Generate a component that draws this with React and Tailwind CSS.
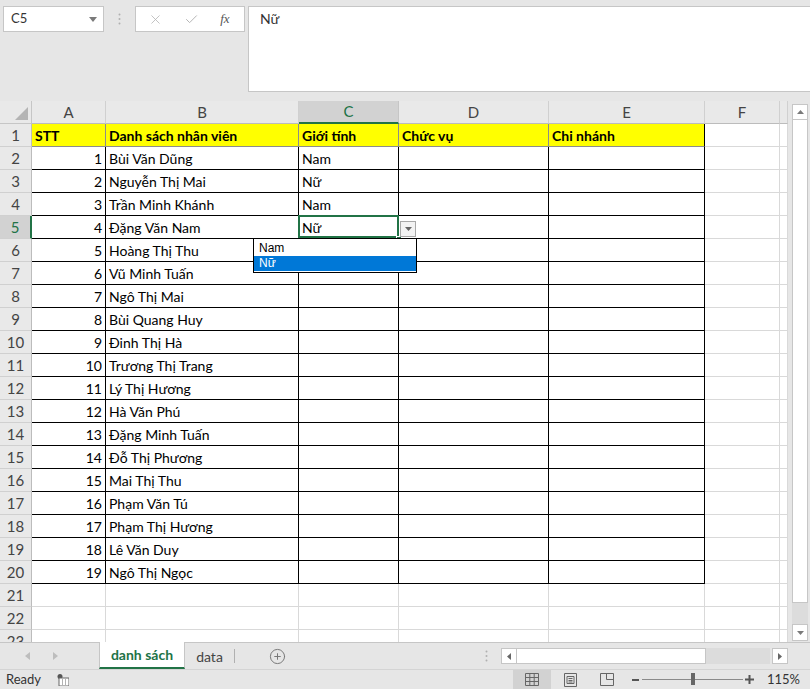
import { X, Check, CirclePlus } from "lucide-react";

const cols = [
  { key: "A", w: 74 },
  { key: "B", w: 193 },
  { key: "C", w: 100 },
  { key: "D", w: 150 },
  { key: "E", w: 156 },
  { key: "F", w: 75 },
  { key: "G", w: 8 },
];

const names = [
  ["Bùi Văn Dũng", "Nam"],
  ["Nguyễn Thị Mai", "Nữ"],
  ["Trần Minh Khánh", "Nam"],
  ["Đặng Văn Nam", "Nữ"],
  ["Hoàng Thị Thu", ""],
  ["Vũ Minh Tuấn", ""],
  ["Ngô Thị Mai", ""],
  ["Bùi Quang Huy", ""],
  ["Đinh Thị Hà", ""],
  ["Trương Thị Trang", ""],
  ["Lý Thị Hương", ""],
  ["Hà Văn Phú", ""],
  ["Đặng Minh Tuấn", ""],
  ["Đỗ Thị Phương", ""],
  ["Mai Thị Thu", ""],
  ["Phạm Văn Tú", ""],
  ["Phạm Thị Hương", ""],
  ["Lê Văn Duy", ""],
  ["Ngô Thị Ngọc", ""],
];

const header = ["STT", "Danh sách nhân viên", "Giới tính", "Chức vụ", "Chi nhánh"];

function cellValue(r, c) {
  if (r === 1) return header[c] || "";
  const item = names[r - 2];
  if (!item) return "";
  if (c === 0) return String(r - 1);
  if (c === 1) return item[0];
  if (c === 2) return item[1];
  return "";
}

function Dots() {
  return (
    <svg width="3" height="12" viewBox="0 0 3 12">
      <circle cx="1.5" cy="1.5" r="1" fill="#b0b0b0" />
      <circle cx="1.5" cy="6" r="1" fill="#b0b0b0" />
      <circle cx="1.5" cy="10.5" r="1" fill="#b0b0b0" />
    </svg>
  );
}

function FormulaBar() {
  return (
    <div className="h-[101px] flex items-start pt-[6px] pl-[3px]">
      <div className="w-[101px] h-[26px] shrink-0 bg-white border border-[#c6c6c6] flex items-center justify-between pl-[7px] pr-[6px] text-[13px] text-[#333]">
        <span>C5</span>
        <svg width="8" height="5" viewBox="0 0 8 5">
          <path d="M0 0h8L4 5z" fill="#7a7a7a" />
        </svg>
      </div>
      <div className="w-[31px] h-[26px] shrink-0 flex items-center justify-center">
        <Dots />
      </div>
      <div className="w-[110px] h-[26px] shrink-0 bg-white border border-[#c6c6c6] flex items-center justify-around pl-[2px] pr-[4px]">
        <X size={15} strokeWidth={1.3} color="#b5b5b5" />
        <Check size={15} strokeWidth={1.6} color="#b5b5b5" />
        <span className="text-[13px] italic text-[#555]" style={{ fontFamily: '"Liberation Serif", serif' }}>
          fx
        </span>
      </div>
      <div className="ml-[3px] flex-1 h-[86px] bg-white border border-[#c6c6c6] border-r-0 pl-[11px] pt-[1px] text-[14px] text-[#333]">
        Nữ
      </div>
    </div>
  );
}

function Grid() {
  const rowNums = Array.from({ length: 23 }, (_, i) => i + 1);
  return (
    <div className="w-[788px] h-[541px] shrink-0 overflow-hidden bg-white">
      <div className="flex h-[23px] bg-[#e9e9e9]">
        <div className="w-[32px] h-[23px] shrink-0 border-r border-b border-[#c6c6c6] relative">
          <svg className="absolute right-[3px] bottom-[3px]" width="13" height="13" viewBox="0 0 13 13">
            <path d="M13 0V13H0z" fill="#b4b4b4" />
          </svg>
        </div>
        {cols.map((col) => {
          const sel = col.key === "C";
          return (
            <div
              key={col.key}
              style={{ width: col.w }}
              className={
                "h-[23px] shrink-0 flex items-center justify-center text-[15px] border-r " +
                (sel
                  ? "bg-[#d2d2d2] border-[#c6c6c6] border-b-2 border-b-[#217346] text-[#217346]"
                  : "border-[#d0d0d0] border-b border-b-[#bcbcbc] text-[#444]")
              }
            >
              {col.key === "G" ? "" : col.key}
            </div>
          );
        })}
      </div>
      {rowNums.map((r) => {
        const selRow = r === 5;
        return (
          <div key={r} className="flex h-[23px]">
            <div
              className={
                "w-[32px] h-[23px] shrink-0 flex items-center justify-center text-[15px] border-b border-[#d0d0d0] " +
                (selRow
                  ? "bg-[#d2d2d2] border-r-2 border-r-[#217346] text-[#217346]"
                  : "bg-[#e9e9e9] border-r border-r-[#bcbcbc] text-[#444]")
              }
            >
              {r}
            </div>
            {cols.map((col, c) => {
              const inRange = r <= 20 && c <= 4;
              const val = cellValue(r, c);
              let cls = "";
              if (r === 1 && inRange) {
                cls = "bg-[#ffff00] font-bold border-b-[#8c8c8c] " + (c === 4 ? "border-r-black" : "border-r-[#8c8c8c]");
              } else if (inRange) {
                cls = "border-b-black border-r-black";
              } else {
                cls = "border-b-[#d9d9d9] border-r-[#d9d9d9]";
              }
              const isSel = r === 5 && c === 2;
              return (
                <div
                  key={col.key}
                  style={{ width: col.w }}
                  className={
                    "h-[23px] shrink-0 border-r border-b flex items-center text-[14px] text-black relative " +
                    (c === 0 && r > 1 ? "justify-end pr-[3px] " : "pl-[3px] ") +
                    cls
                  }
                >
                  <span className="whitespace-nowrap">{val}</span>
                  {isSel && (
                    <>
                      <div className="absolute -left-[1px] -top-[1px] w-[101px] h-[23px] border-2 border-[#217346] pointer-events-none" />
                      <div className="absolute -right-[4px] -bottom-[4px] w-[6px] h-[6px] bg-[#217346] border border-white z-10" />
                      <div className="absolute left-[101px] top-[5px] w-[16px] h-[16px] bg-[#f3f3f3] border border-[#a8a8a8] flex items-center justify-center z-10">
                        <svg width="7" height="4" viewBox="0 0 7 4">
                          <path d="M0 0h7L3.5 4z" fill="#666" />
                        </svg>
                      </div>
                      <div
                        className="absolute left-[-46px] top-[22px] w-[164px] bg-white border border-black z-20 text-[12px] pt-[2px] pb-[1px]"
                        style={{ fontFamily: '"Liberation Sans", Arial, sans-serif' }}
                      >
                        <div className="h-[15px] leading-[15px] pl-[5px] text-black">Nam</div>
                        <div className="h-[15px] leading-[15px] pl-[5px] bg-[#0078d7] text-white">Nữ</div>
                      </div>
                    </>
                  )}
                </div>
              );
            })}
          </div>
        );
      })}
    </div>
  );
}

function VScroll() {
  return (
    <div className="w-[22px] h-[541px] shrink-0 bg-[#e6e6e6] flex flex-col pl-[4px] pt-[3px]">
      <div className="w-[16px] h-[16px] bg-white border border-[#c6c6c6] flex items-center justify-center">
        <svg width="7" height="4" viewBox="0 0 7 4">
          <path d="M0 4h7L3.5 0z" fill="#7a7a7a" />
        </svg>
      </div>
      <div className="w-[16px] h-[483px] bg-white border border-[#c6c6c6] border-t-0" />
      <div className="w-[16px] h-[21px] bg-[#dcdcdc]" />
      <div className="w-[16px] h-[17px] bg-white border border-[#c6c6c6] flex items-center justify-center">
        <svg width="7" height="4" viewBox="0 0 7 4">
          <path d="M0 0h7L3.5 4z" fill="#7a7a7a" />
        </svg>
      </div>
    </div>
  );
}

function TabBar() {
  return (
    <div className="h-[27px] flex items-stretch bg-[#e6e6e6] border-t border-[#c6c6c6]">
      <div className="w-[99px] shrink-0 flex items-center">
        <svg className="ml-[25px]" width="5" height="8" viewBox="0 0 5 8">
          <path d="M5 0V8L0 4z" fill="#bdbdbd" />
        </svg>
        <svg className="ml-[23px]" width="5" height="8" viewBox="0 0 5 8">
          <path d="M0 0V8L5 4z" fill="#bdbdbd" />
        </svg>
      </div>
      <div className="w-[86px] shrink-0 -mt-[1px] bg-white border-x border-[#c6c6c6] border-b-2 border-b-[#217346] flex items-center justify-center text-[14px] font-bold text-[#217346]">
        danh sách
      </div>
      <div className="w-[49px] shrink-0 flex items-center justify-center text-[14px] text-[#444]">data</div>
      <div className="w-[1px] shrink-0 my-[6px] bg-[#b0b0b0]" />
      <div className="w-[84px] shrink-0 flex items-center justify-center">
        <CirclePlus size={17} strokeWidth={1.4} color="#777" />
      </div>
      <div className="flex items-center shrink-0">
        <div className="ml-[166px]">
          <Dots />
        </div>
        <div className="ml-[13px] flex items-center h-[16px]">
          <div className="w-[16px] h-[16px] bg-white border border-[#c6c6c6] flex items-center justify-center">
            <svg width="4" height="7" viewBox="0 0 4 7">
              <path d="M4 0V7L0 3.5z" fill="#666" />
            </svg>
          </div>
          <div className="w-[189px] h-[16px] bg-white border border-[#c6c6c6] border-l-0" />
          <div className="w-[64px] h-[16px] bg-[#dcdcdc]" />
          <div className="ml-[2px] w-[16px] h-[16px] bg-white border border-[#c6c6c6] flex items-center justify-center">
            <svg width="4" height="7" viewBox="0 0 4 7">
              <path d="M0 0V7L4 3.5z" fill="#666" />
            </svg>
          </div>
        </div>
      </div>
    </div>
  );
}

function StatusBar() {
  return (
    <div className="h-[20px] flex items-center bg-[#e6e6e6] border-t border-[#d4d4d4] text-[13px] text-[#333]">
      <span className="w-[57px] shrink-0 pl-[6px]">Ready</span>
      <svg className="shrink-0" width="12" height="12" viewBox="0 0 12 12">
        <circle cx="3" cy="2.5" r="2.5" fill="#555" />
        <rect x="2" y="4" width="10" height="8" fill="#fff" stroke="#666" strokeWidth="1" />
        <path d="M5 6h1M8 6h1M5 8h1M8 8h1M5 10h1M8 10h1" stroke="#666" strokeWidth="1" />
      </svg>
      <div className="ml-[444px] w-[38px] h-[20px] shrink-0 bg-[#d2d2d2] flex items-center justify-center">
        <svg width="14" height="13" viewBox="0 0 14 13">
          <path d="M0.5 0.5h13v12h-13zM0.5 4.5h13M0.5 8.5h13M4.8 0.5v12M9.2 0.5v12" fill="none" stroke="#666" />
        </svg>
      </div>
      <div className="ml-[12px] w-[14px] shrink-0 flex items-center justify-center">
        <svg width="13" height="14" viewBox="0 0 13 14">
          <path d="M0.5 0.5h12v13h-12z M3 3.5h7v7h-7z" fill="none" stroke="#666" />
          <path d="M4.5 5.5h4M4.5 7.5h4M4.5 9h4" stroke="#666" />
        </svg>
      </div>
      <div className="ml-[23px] w-[14px] shrink-0 flex items-center justify-center">
        <svg width="14" height="13" viewBox="0 0 14 13">
          <path d="M0.5 0.5h13v12h-13z M6.5 0.5v6h7" fill="none" stroke="#666" />
        </svg>
      </div>
      <div className="ml-[18px] flex items-center shrink-0">
        <div className="w-[7px] h-[2px] bg-[#555]" />
        <div className="ml-[3px] w-[101px] h-[1px] bg-[#8a8a8a] relative">
          <div className="absolute left-[49px] -top-[6px] w-[4px] h-[12px] bg-[#666]" />
        </div>
        <svg className="ml-[2px]" width="9" height="9" viewBox="0 0 9 9">
          <path d="M4.5 0v9M0 4.5h9" stroke="#555" strokeWidth="2" />
        </svg>
        <span className="ml-[13px]">115%</span>
      </div>
    </div>
  );
}

export default function App() {
  return (
    <div
      className="w-[810px] h-[689px] overflow-hidden bg-[#e6e6e6] flex flex-col"
      style={{ fontFamily: 'Lato, "Noto Sans", sans-serif' }}
    >
      <FormulaBar />
      <div className="flex">
        <Grid />
        <VScroll />
      </div>
      <TabBar />
      <StatusBar />
    </div>
  );
}
